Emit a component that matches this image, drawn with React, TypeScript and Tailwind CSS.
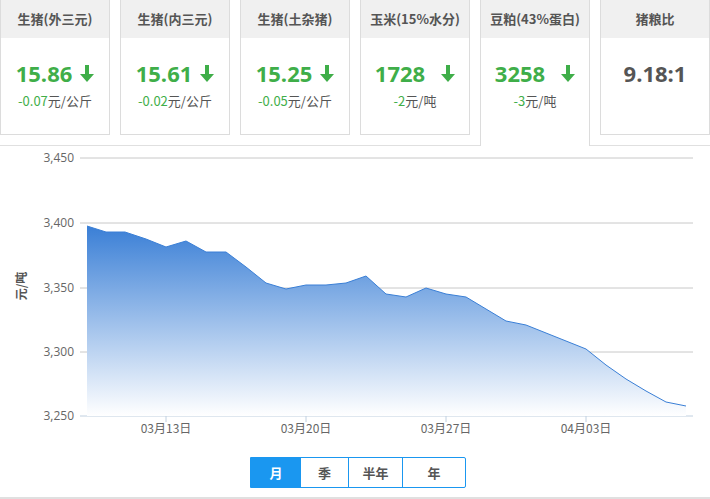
import React from "react";

const cards = [
  { t: "生猪(外三元)", v: "15.86", c: "-0.07", u: "元/公斤" },
  { t: "生猪(内三元)", v: "15.61", c: "-0.02", u: "元/公斤" },
  { t: "生猪(土杂猪)", v: "15.25", c: "-0.05", u: "元/公斤" },
  { t: "玉米(15%水分)", v: "1728", c: "-2", u: "元/吨" },
  { t: "豆粕(43%蛋白)", v: "3258", c: "-3", u: "元/吨", active: true },
  { t: "猪粮比", v: "9.18:1" },
];

const pts: [number, number][] = [
  [87,225],[106,231],[125,231],[146,238],[166,246],[186,240],[206,251],[226,251],[246,266],[266,282],[286,288],[306,284],[326,284],[346,282],[366,275],[386,293],[406,296],[426,287],[446,293],[466,296],[486,308],[506,320],[526,324],[546,332],[566,340],[586,348],[606,364],[626,378],[646,390],[666,401],[686,405]
];

const Arrow = () => (
  <svg width="14" height="17" viewBox="0 0 14 17" className="ml-2">
    <rect x="5" y="0" width="4" height="10" fill="#3fae49" />
    <polygon points="0,9 14,9 7,17" fill="#3fae49" />
  </svg>
);

export default function App() {
  const off = 145;
  const line = pts.map(([x, y]) => `${x},${y - off}`).join(" ");
  const area = `87,${415 - off} ${line} 686,${415 - off}`;
  const grid = [157, 222, 287, 351, 415];
  const labels = ["3,450", "3,400", "3,350", "3,300", "3,250"];
  return (
    <div className="w-[710px] h-[499px] bg-white relative overflow-hidden" style={{ fontFamily: '"Noto Sans CJK SC", "Noto Sans", sans-serif' }}>
      <div className="flex h-[146px] border-b border-[#e0e0e0]">
        {cards.map((c, i) => (
          <div
            key={i}
            className={`w-[110px] ${i > 0 ? "ml-[10px]" : ""} border border-[#dcdcdc] border-t-0 flex flex-col ${c.active ? "h-[146px] border-b-0 bg-white relative z-10 -mb-px" : "h-[135px]"}`}
          >
            <div className="h-[38px] bg-[#f0f0f0] flex items-center justify-center text-[13px] font-bold text-[#555]">{c.t}</div>
            <div className="flex flex-col items-center pt-[20px]">
              <div className={`flex items-center text-[22px] font-bold leading-[30px] ${c.u ? "text-[#3fae49]" : "text-[#555]"}`} style={{ fontFamily: '"Open Sans", "Noto Sans", sans-serif' }}>
                {c.v}
                {c.u && (c.v.length === 4 ? <span className="ml-2"><Arrow /></span> : <Arrow />)}
              </div>
              {c.u && (
                <div className="text-[13px] mt-[3px] text-[#555]">
                  <span className="text-[#3fae49]">{c.c}</span>{c.u}
                </div>
              )}
            </div>
          </div>
        ))}
      </div>
      <svg width="710" height="300" className="block">
        <defs>
          <linearGradient id="g" x1="0" y1="0" x2="0" y2="1">
            <stop offset="0" stopColor="#3a7fd6" />
            <stop offset="1" stopColor="#ffffff" />
          </linearGradient>
        </defs>
        {grid.map((y, i) => (
          <g key={i}>
            <line x1="80" x2="693" y1={y - off} y2={y - off} stroke={i === 4 ? "#c0d0e0" : "#c8c8c8"} />
            <text x="74" y={y - off + 4} textAnchor="end" fontSize="12" fill="#666" fontFamily="Open Sans, sans-serif">{labels[i]}</text>
          </g>
        ))}
        <polygon points={area} fill="url(#g)" />
        <polyline points={line} fill="none" stroke="#3a7fd6" strokeWidth="1" />
        {[166, 306, 446, 586].map((x, i) => (
          <g key={x}>
            <line x1={x} x2={x} y1={415 - off} y2={421 - off} stroke="#c0d0e0" />
            <text x={x} y={432 - off} textAnchor="middle" fontSize="12" fill="#666">{["03月13日","03月20日","03月27日","04月03日"][i]}</text>
          </g>
        ))}
        <text x="0" y="0" fontSize="12" fontWeight="bold" fill="#555" transform={`translate(26,${285 - off}) rotate(-90)`} textAnchor="middle">元/吨</text>
      </svg>
      <div className="absolute left-[250px] top-[457px] flex h-[31px] border border-[#1a97f0] rounded-r-[2px] text-[13px] font-bold text-[#555]">
        <div className="w-[50px] flex items-center justify-center bg-[#1a97f0] text-white">月</div>
        <div className="w-[48px] flex items-center justify-center border-r border-[#1a97f0]">季</div>
        <div className="w-[54px] flex items-center justify-center border-r border-[#1a97f0]">半年</div>
        <div className="w-[62px] flex items-center justify-center">年</div>
      </div>
      <div className="absolute left-0 right-0 top-[497px] h-[2px] bg-[#e0e0e0]" />
    </div>
  );
}
